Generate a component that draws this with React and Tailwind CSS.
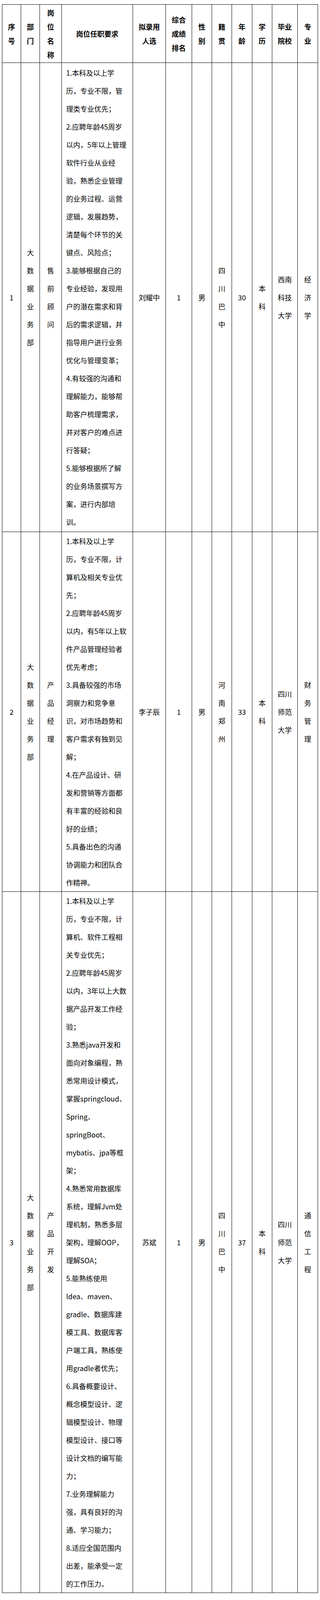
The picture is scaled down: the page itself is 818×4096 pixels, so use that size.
import React from "react";

const COLS = [48, 48, 56, 182, 84, 67, 51, 51, 52, 51, 65, 52];

const HEADER = [
  ["序", "号"],
  ["部", "门"],
  ["岗", "位", "名", "称"],
  ["岗位任职要求"],
  ["拟录用", "人选"],
  ["综合", "成绩", "排名"],
  ["性", "别"],
  ["籍", "贯"],
  ["年", "龄"],
  ["学", "历"],
  ["毕业", "院校"],
  ["专", "业"],
];

const DEPT = ["大", "数", "据", "业", "务", "部"];

const ROWS = [
  {
    h: "h-[1201px]",
    no: "1",
    post: ["售", "前", "顾", "问"],
    desc: [
      "1.本科及以上学",
      "历，专业不限，管",
      "理类专业优先；",
      "2.应聘年龄45周岁",
      "以内，5年以上管理",
      "软件行业从业经",
      "验，熟悉企业管理",
      "的业务过程、运营",
      "逻辑，发展趋势，",
      "清楚每个环节的关",
      "键点、风险点；",
      "3.能够根据自己的",
      "专业经验，发现用",
      "户的潜在需求和背",
      "后的需求逻辑，并",
      "指导用户进行业务",
      "优化与管理变革；",
      "4.有较强的沟通和",
      "理解能力，能够帮",
      "助客户梳理需求，",
      "并对客户的难点进",
      "行答疑；",
      "5.能够根据所了解",
      "的业务场景撰写方",
      "案，进行内部培",
      "训。",
    ],
    name: "刘耀中",
    rank: "1",
    gender: "男",
    origin: ["四", "川", "巴", "中"],
    age: "30",
    edu: ["本", "科"],
    school: ["西南", "科技", "大学"],
    major: ["经", "济", "学"],
  },
  {
    h: "h-[920px]",
    no: "2",
    post: ["产", "品", "经", "理"],
    desc: [
      "1.本科及以上学",
      "历，专业不限，计",
      "算机及相关专业优",
      "先；",
      "2.应聘年龄45周岁",
      "以内，有5年以上软",
      "件产品管理经验者",
      "优先考虑；",
      "3.具备较强的市场",
      "洞察力和竞争意",
      "识，对市场趋势和",
      "客户需求有独到见",
      "解；",
      "4.在产品设计、研",
      "发和营销等方面都",
      "有丰富的经验和良",
      "好的业绩；",
      "5.具备出色的沟通",
      "协调能力和团队合",
      "作精神。",
    ],
    name: "李子辰",
    rank: "1",
    gender: "男",
    origin: ["河", "南", "郑", "州"],
    age: "33",
    edu: ["本", "科"],
    school: ["四川", "师范", "大学"],
    major: ["财", "务", "管", "理"],
  },
  {
    h: "h-[1795px]",
    no: "3",
    post: ["产", "品", "开", "发"],
    desc: [
      "1.本科及以上学",
      "历，专业不限，计",
      "算机、软件工程相",
      "关专业优先；",
      "2.应聘年龄45周岁",
      "以内，3年以上大数",
      "据产品开发工作经",
      "验；",
      "3.熟悉java开发和",
      "面向对象编程，熟",
      "悉常用设计模式，",
      "掌握springcloud、",
      "Spring、",
      "springBoot、",
      "mybatis、jpa等框",
      "架；",
      "4.熟悉常用数据库",
      "系统，理解Jvm处",
      "理机制，熟悉多层",
      "架构，理解OOP，",
      "理解SOA；",
      "5.能熟练使用",
      "Idea、maven、",
      "gradle、数据库建",
      "模工具、数据库客",
      "户端工具，熟练使",
      "用gradle者优先；",
      "6.具备概要设计、",
      "概念模型设计、逻",
      "辑模型设计、物理",
      "模型设计、接口等",
      "设计文档的编写能",
      "力；",
      "7.业务理解能力",
      "强，具有良好的沟",
      "通、学习能力；",
      "8.适应全国范围内",
      "出差，能承受一定",
      "的工作压力。",
    ],
    name: "苏斌",
    rank: "1",
    gender: "男",
    origin: ["四", "川", "巴", "中"],
    age: "37",
    edu: ["本", "科"],
    school: ["四川", "师范", "大学"],
    major: ["通", "信", "工", "程"],
  },
];

function Lines({ items }) {
  return (
    <>
      {items.map((t, i) => (
        <div key={i} className="whitespace-nowrap">
          {t}
        </div>
      ))}
    </>
  );
}

function Cell({ children, className = "" }) {
  return (
    <td
      className={
        "border border-black p-0 align-middle text-center leading-[46px] " +
        className
      }
    >
      {children}
    </td>
  );
}

export default function App() {
  return (
    <div className="min-h-screen bg-white pl-[5px] pt-[11px] pb-[20px] font-[family-name:'Noto_Sans_CJK_SC','Noto_Sans',sans-serif] text-black">
      <table className="w-[807px] table-fixed border-collapse border-[1.5px] border-black">
        <colgroup>
          {COLS.map((w, i) => (
            <col key={i} style={{ width: w }} />
          ))}
        </colgroup>
        <thead>
          <tr className="h-[149px]">
            {HEADER.map((lines, i) => (
              <th
                key={i}
                className="border border-black p-0 align-middle text-center text-[18px] font-bold leading-[36px]"
              >
                <Lines items={lines} />
              </th>
            ))}
          </tr>
        </thead>
        <tbody className="text-[18px]">
          {ROWS.map((r, idx) => (
            <tr key={idx} className={r.h}>
              <Cell>{r.no}</Cell>
              <Cell>
                <Lines items={DEPT} />
              </Cell>
              <Cell>
                <Lines items={r.post} />
              </Cell>
              <Cell className="!text-left pl-[11px]">
                <Lines items={r.desc} />
              </Cell>
              <Cell>{r.name}</Cell>
              <Cell>{r.rank}</Cell>
              <Cell>{r.gender}</Cell>
              <Cell>
                <Lines items={r.origin} />
              </Cell>
              <Cell>{r.age}</Cell>
              <Cell>
                <Lines items={r.edu} />
              </Cell>
              <Cell>
                <Lines items={r.school} />
              </Cell>
              <Cell>
                <Lines items={r.major} />
              </Cell>
            </tr>
          ))}
        </tbody>
      </table>
    </div>
  );
}
